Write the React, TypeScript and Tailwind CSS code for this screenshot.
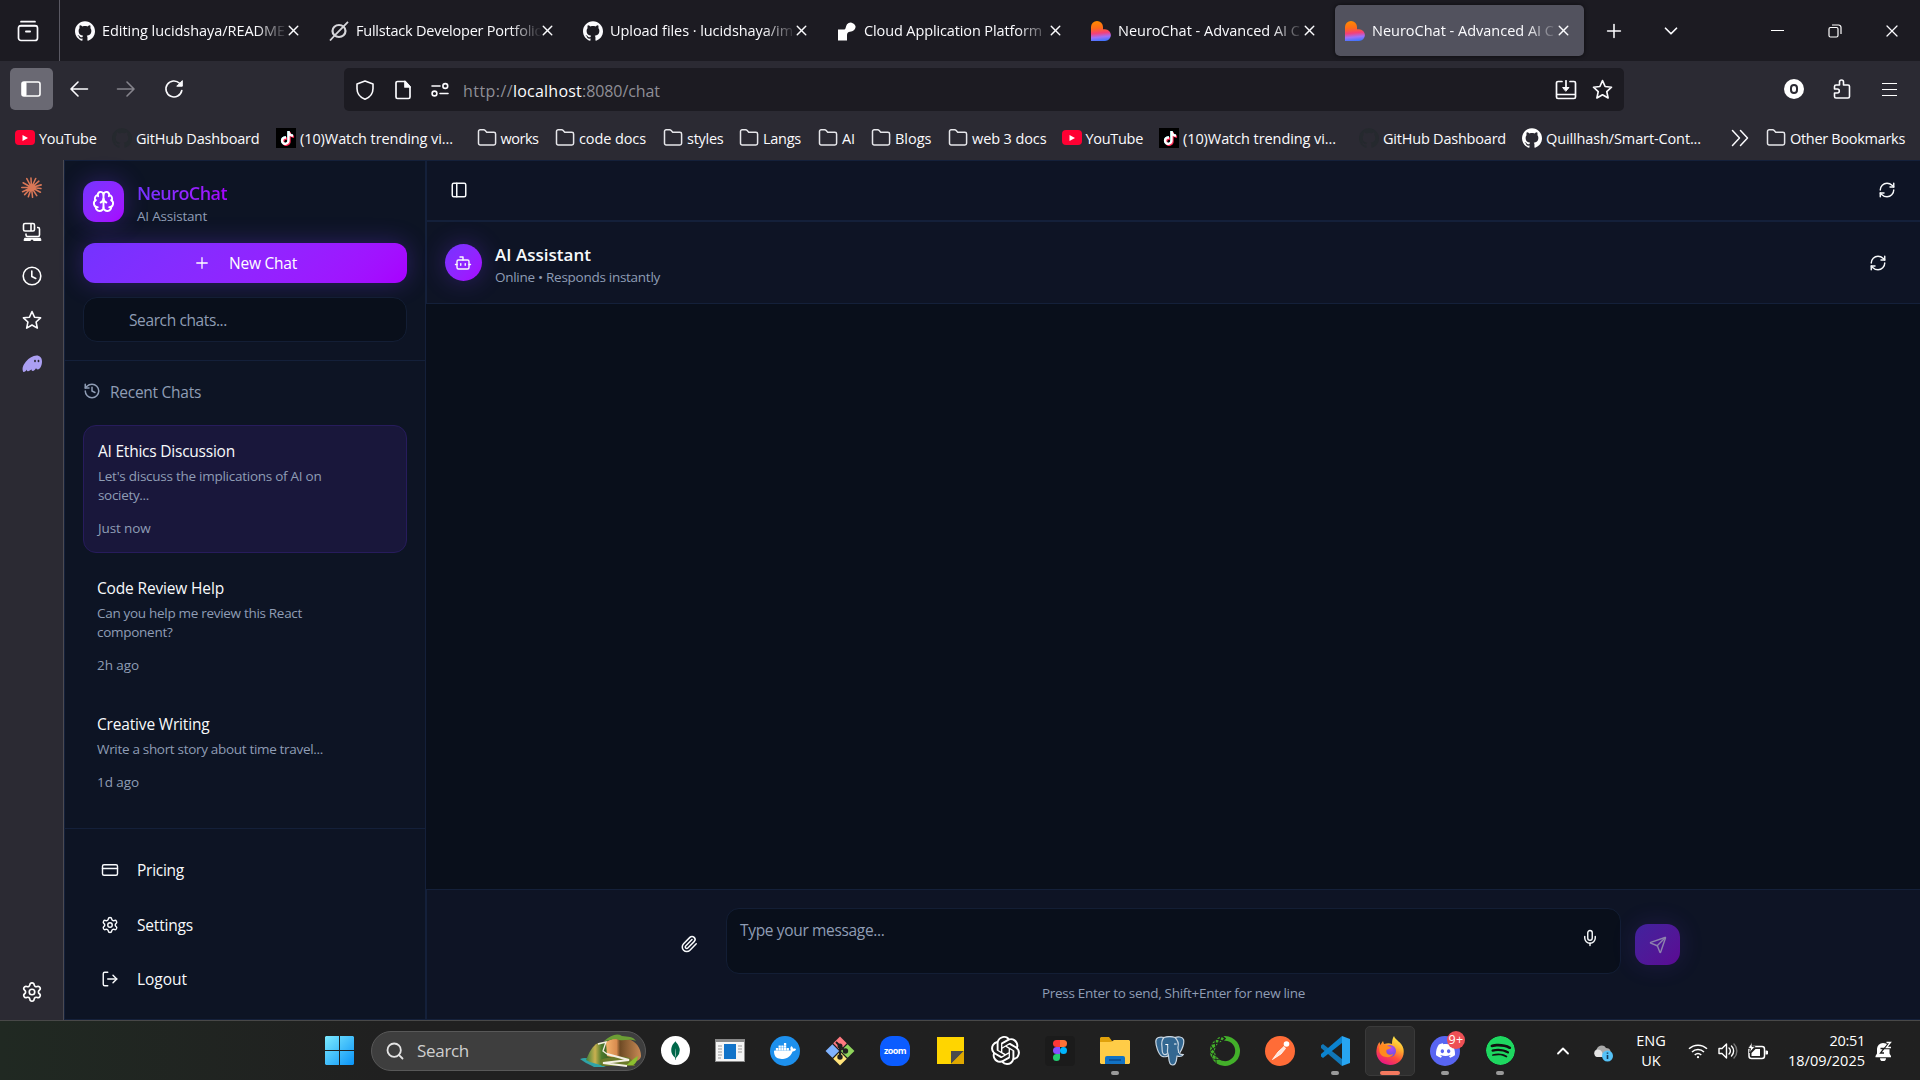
import { useLayoutEffect, useRef, useState } from "react";
import type { ReactNode } from "react";
import {
  Bot,
  Brain,
  ChevronDown,
  ChevronUp,
  CreditCard,
  History,
  LogOut,
  Mic,
  PanelLeft,
  Paperclip,
  Plus,
  RefreshCw,
  Search,
  Send,
  Settings,
  X,
} from "lucide-react";
import {
  SiAnaconda,
  SiDiscord,
  SiDocker,
  SiGithub,
  SiMongodb,
  SiOpenai,
  SiSpotify,
  SiTiktok,
} from "react-icons/si";

/* Single line of text whose tracking is adjusted so that it fills `w` pixels. */
function Fit({ w, children, className = "" }: { w: number; children: string; className?: string }) {
  const ref = useRef<HTMLSpanElement>(null);
  const [spacing, setSpacing] = useState(0);
  useLayoutEffect(() => {
    if (!ref.current) return;
    const natural = ref.current.getBoundingClientRect().width - spacing * children.length;
    setSpacing((w - natural) / children.length);
  }, [w, children]);
  return (
    <span ref={ref} style={{ letterSpacing: spacing }} className={`inline-block whitespace-pre ${className}`}>
      {children}
    </span>
  );
}

/* ---------- Browser chrome ---------- */

function Heart() {
  return (
    <svg viewBox="0 0 20 20" className="size-5">
      <defs>
        <linearGradient id="heart" x1="0.4" y1="0" x2="0.5" y2="1">
          <stop offset="0" stopColor="#ff8a00" />
          <stop offset="0.35" stopColor="#ff6a1a" />
          <stop offset="0.6" stopColor="#f43f7a" />
          <stop offset="0.8" stopColor="#a070f8" />
          <stop offset="1" stopColor="#3f74ff" />
        </linearGradient>
      </defs>
      <path d="M0 6a6 6 0 0 1 12 0v2.200h2a5.900 5.900 0 0 1 0 11.800H0z" fill="url(#heart)" />
    </svg>
  );
}

function SlashedO() {
  return (
    <svg viewBox="0 0 20 20" className="size-5" fill="none" stroke="#d6d6da" strokeWidth="2.200">
      <ellipse cx="10" cy="10" rx="6.500" ry="6" />
      <path d="M1 19.500 7 13 19 .8" strokeWidth="1.800" />
    </svg>
  );
}

function RenderLogo() {
  return (
    <svg viewBox="0 0 20 20" className="size-5" fill="#fff">
      <path d="M1 8.500h6.500C9 8 8.500 5.500 10 3.200A5 5 0 0 1 18.500 5c.5 3.500-2.500 5.500-5.500 5.700-2 .3-3 1.300-3 3.300v5.500H1z" />
    </svg>
  );
}

const tabs: { icon: ReactNode; title: string; w: number }[] = [
  { icon: <SiGithub className="size-5" />, title: "Editing lucidshaya/README", w: 183 },
  { icon: <SlashedO />, title: "Fullstack Developer Portfolio", w: 187 },
  { icon: <SiGithub className="size-5" />, title: "Upload files · lucidshaya/im", w: 183 },
  { icon: <RenderLogo />, title: "Cloud Application Platform", w: 178 },
  { icon: <Heart />, title: "NeuroChat - Advanced AI C", w: 182 },
  { icon: <Heart />, title: "NeuroChat - Advanced AI C", w: 182 },
];

function TabStrip() {
  return (
    <div className="flex h-[61px] items-center bg-[#1c1b22] text-[#fbfbfe]">
      <div className="flex h-full w-[60px] items-center justify-center border-r border-[#5a5963] pr-1">
        <svg viewBox="0 0 22 22" className="size-[22px]" fill="none" stroke="#fbfbfe" strokeWidth="1.700" strokeLinecap="round">
          <path d="M4 1.700h14M2.500 6h17" />
          <rect x="1.500" y="5.500" width="19" height="15" rx="2.500" />
          <path d="M9 11.500h4" strokeWidth="2" />
        </svg>
      </div>
      <div className="ml-[5px] flex gap-[5px]">
        {tabs.map((t, i) => (
          <div
            key={i}
            className={`flex h-[51px] w-[249px] items-center rounded-[5px] pl-2.5 ${
              i === 5 ? "bg-[#52525e] shadow-[0_0_4px_rgba(0,0,0,0.6)]" : ""
            }`}
          >
            {t.icon}
            <div className="ml-[7px] w-[188px] shrink-0 overflow-hidden pt-px text-[14.500px] leading-6 [mask-image:linear-gradient(to_right,black_154px,transparent_186px)]">
              <Fit w={t.w}>{t.title}</Fit>
            </div>
            <X className="-ml-[5px] size-[17px] shrink-0" strokeWidth={2} />
          </div>
        ))}
      </div>
      <Plus className="ml-[19px] size-[22px]" strokeWidth={1.700} />
      <ChevronDown className="ml-[35px] size-[22px]" strokeWidth={1.900} />
      <div className="ml-[89px] h-px w-[13px] bg-white" />
      <svg viewBox="0 0 14 14" className="ml-[44px] size-[14px]" fill="none" stroke="#fff" strokeWidth="1.200">
        <rect x="1" y="3.500" width="9" height="9.500" rx="1.500" />
        <path d="M4 1h6.500A2.500 2.500 0 0 1 13 3.500V10" />
      </svg>
      <X className="ml-10 size-[20px]" strokeWidth={1.500} />
    </div>
  );
}

function NavBar() {
  return (
    <div className="flex h-[54px] items-start bg-[#2b2a33] pt-[7px] text-[#fbfbfe]">
      <div className="flex h-[42px] flex-1 items-center pl-2.5">
        <div className="flex h-[42px] w-[43px] items-center justify-center rounded-[5px] bg-[#6a6973] pr-px">
          <svg viewBox="0 0 20 16" className="h-4 w-5" fill="none" stroke="#fff" strokeWidth="1.600">
            <rect x="1" y="1" width="18" height="14" rx="2" />
            <path d="M1.500 1.500h3.500v13H1.500z" fill="#fff" strokeWidth="1" />
          </svg>
        </div>
        <svg viewBox="0 0 20 20" className="ml-4 size-5" fill="none" stroke="#fbfbfe" strokeWidth="1.600" strokeLinecap="round" strokeLinejoin="round">
          <path d="M18.500 10h-16M9 3l-7 7 7 7" />
        </svg>
        <svg viewBox="0 0 20 20" className="ml-[27px] size-5" fill="none" stroke="#85848c" strokeWidth="1.600" strokeLinecap="round" strokeLinejoin="round">
          <path d="M1.500 10h16M11 3l7 7-7 7" />
        </svg>
        <svg viewBox="0 0 20 20" className="ml-[28px] size-5" fill="none" stroke="#fbfbfe" strokeWidth="1.600" strokeLinecap="round">
          <path d="M17.800 11.500A8 8 0 1 1 15.600 4.300L17 5.700" />
          <path d="M18.300 2v5.200h-5.200z" fill="#fbfbfe" strokeWidth="1" strokeLinejoin="round" />
        </svg>
      </div>
      <div className="flex h-[43px] w-[1280px] items-center rounded-[5px] bg-[#1c1b22]">
        <svg viewBox="0 0 20 20" className="ml-[11px] size-5" fill="none" stroke="#fbfbfe" strokeWidth="1.600" strokeLinejoin="round">
          <path d="M10 1 2 4v4.500C2 13.500 5.500 17.500 10 19.200c4.500-1.700 8-5.700 8-10.700V4z" />
        </svg>
        <svg viewBox="0 0 20 20" className="ml-[18px] size-5" fill="none" stroke="#fbfbfe" strokeWidth="1.700" strokeLinejoin="round">
          <path d="M4.500 1.500H12L17 7v10a1.500 1.500 0 0 1-1.500 1.500h-11A1.500 1.500 0 0 1 3 17V3a1.500 1.500 0 0 1 1.500-1.500z" />
          <path d="M12 1.500V7h5z" fill="#fbfbfe" />
        </svg>
        <svg viewBox="0 0 20 20" className="ml-[17px] size-5" fill="none" stroke="#fbfbfe" strokeWidth="1.600" strokeLinecap="round">
          <path d="M2 6h8M10 13.500h8" />
          <circle cx="15.300" cy="6" r="2.400" />
          <circle cx="4.500" cy="13.500" r="2.400" />
        </svg>
        <div className="ml-[13px] w-[1092px] pt-[3px] text-[16px] leading-6 text-[#8f8e96]">
          <Fit w={50}>http://</Fit>
          <Fit w={69} className="text-[#fbfbfe]">localhost</Fit>
          <Fit w={78}>:8080/chat</Fit>
        </div>
        <svg viewBox="0 0 22 20" className="h-5 w-[22px]" fill="none" stroke="#fbfbfe" strokeWidth="1.700" strokeLinecap="round" strokeLinejoin="round">
          <path d="M7 1.500H3a1.500 1.500 0 0 0-1.500 1.500v14A1.500 1.500 0 0 0 3 18.500h16a1.500 1.500 0 0 0 1.500-1.500V3A1.500 1.500 0 0 0 19 1.500h-4M2 14.500h18M11 .8v8.500" />
          <path d="M8 7.500h6l-3 3.500z" fill="#fbfbfe" strokeWidth="1" />
        </svg>
        <StarOutline className="ml-[15px] size-[21px]" />
      </div>
      <div className="flex h-[42px] w-[296px] items-center">
        <div className="ml-[160px] flex size-5 items-center justify-center rounded-full bg-white">
          <div className="h-[10px] w-2 rounded-full border-2 border-[#2b2a33]" />
        </div>
        <svg viewBox="0 0 20 20" className="ml-[28px] size-5" fill="none" stroke="#fbfbfe" strokeWidth="1.600" strokeLinejoin="round">
          <path d="M2.500 10V7.500A1.500 1.500 0 0 1 4 6h3.500V3a2 2 0 0 1 4 0v3H16a1.500 1.500 0 0 1 1.500 1.500v10A1.500 1.500 0 0 1 16 19H4a1.500 1.500 0 0 1-1.500-1.500V14h2.800a2 2 0 0 0 0-4z" />
        </svg>
        <div className="ml-[30px] flex w-[15px] flex-col gap-[5px]">
          <div className="h-px bg-white" />
          <div className="h-px bg-white" />
          <div className="h-px bg-white" />
        </div>
      </div>
    </div>
  );
}

function StarOutline({ className }: { className: string }) {
  return (
    <svg viewBox="0 0 24 24" className={className} fill="none" stroke="#fbfbfe" strokeWidth="1.900" strokeLinejoin="round">
      <path d="M12 1.800 15 8.600l7.300.8-5.400 5 1.500 7.300L12 18l-6.400 3.700 1.500-7.300-5.400-5L9 8.600z" />
    </svg>
  );
}

function Folder() {
  return (
    <svg viewBox="0 0 20 20" className="size-5" fill="none" stroke="#e6e6ea" strokeWidth="1.500" strokeLinejoin="round">
      <path d="M1.500 3.500A1.700 1.700 0 0 1 3.200 1.800h3.500c.6 0 1.100.3 1.500.7l1.500 1.700h7.200a1.700 1.700 0 0 1 1.700 1.700v9.400a1.700 1.700 0 0 1-1.700 1.700H3.200a1.700 1.700 0 0 1-1.700-1.700z" />
    </svg>
  );
}

function YouTube() {
  return (
    <div className="flex h-[15px] w-5 items-center justify-center rounded-[4px] bg-[#ff0033]">
      <svg viewBox="0 0 6 6" className="size-1.5">
        <path d="M.5 0v6L6 3z" fill="#fff" />
      </svg>
    </div>
  );
}

function TikTok() {
  return (
    <div className="relative flex size-5 items-center justify-center bg-black">
      <SiTiktok className="absolute left-[3.500px] top-[3px] size-3.5 text-[#25f4ee]" />
      <SiTiktok className="absolute left-[4.500px] top-1 size-3.5 text-[#fe2c55]" />
      <SiTiktok className="absolute left-1 top-[3.500px] size-3.5 text-white" />
    </div>
  );
}

type IconKind = "yt" | "ghd" | "gh" | "tt" | "dir";

const bookmarks: { icon: IconKind; label: string; text: number; w: number }[] = [
  { icon: "yt", label: "YouTube", text: 57.5, w: 97 },
  { icon: "ghd", label: "GitHub Dashboard", text: 123.5, w: 164 },
  { icon: "tt", label: "(10)Watch trending vi...", text: 153, w: 200.5 },
  { icon: "dir", label: "works", text: 38, w: 78.5 },
  { icon: "dir", label: "code docs", text: 67, w: 108 },
  { icon: "dir", label: "styles", text: 36.5, w: 76 },
  { icon: "dir", label: "Langs", text: 38, w: 79 },
  { icon: "dir", label: "AI", text: 13, w: 53 },
  { icon: "dir", label: "Blogs", text: 36.5, w: 77 },
  { icon: "dir", label: "web 3 docs", text: 74.5, w: 113.5 },
  { icon: "yt", label: "YouTube", text: 57.5, w: 97.5 },
  { icon: "tt", label: "(10)Watch trending vi...", text: 153, w: 200 },
  { icon: "ghd", label: "GitHub Dashboard", text: 123, w: 163 },
  { icon: "gh", label: "Quillhash/Smart-Cont...", text: 155, w: 209 },
];

function BookmarkIcon({ kind }: { kind: IconKind }) {
  if (kind === "yt") return <YouTube />;
  if (kind === "tt") return <TikTok />;
  if (kind === "dir") return <Folder />;
  return <SiGithub className={`size-5 ${kind === "gh" ? "text-white" : "text-[#25292e]"}`} />;
}

function BookmarksBar() {
  return (
    <div className="flex h-[45px] items-center bg-[#2b2a33] pl-[15px] text-[14.500px] leading-6 text-[#fbfbfe]">
      {bookmarks.map((b, i) => (
        <div key={i} className="flex shrink-0 items-center" style={{ width: b.w }}>
          <div className="mr-1 w-5 shrink-0">
            <BookmarkIcon kind={b.icon} />
          </div>
          <Fit w={b.text} className="mt-[2px]">{b.label}</Fit>
        </div>
      ))}
      <svg viewBox="0 0 18 18" className="size-[18px]" fill="none" stroke="#fbfbfe" strokeWidth="1.500" strokeLinecap="round" strokeLinejoin="round">
        <path d="m1.500 1.500 7 7.500-7 7.500M9.500 1.500l7 7.500-7 7.500" />
      </svg>
      <div className="ml-[17px] mr-1">
        <Folder />
      </div>
      <Fit w={115} className="mt-[2px]">Other Bookmarks</Fit>
    </div>
  );
}

function Rail() {
  return (
    <div className="flex w-16 shrink-0 flex-col items-center border-r border-[#4b4a52] bg-[#2b2a33] pb-[17px] pt-[17px] text-white">
      <svg viewBox="-10 -10 20 20" className="size-[21px]" stroke="#d97757" strokeWidth="1.500" strokeLinecap="round">
        <path d="M0 0-.5-9M0 0 4-8.600M0 0 7-6M0 0 9.200-2.500M0 0 9 1M0 0 8.500 4.500M0 0 5 7.800M0 0 1 9.300M0 0-3 8.800M0 0-6.500 6.800M0 0-8.500 4M0 0-9.300 0M0 0-8-4.500M0 0-4.500-8.500" />
      </svg>
      <svg viewBox="0 0 20 20" className="mt-6 size-5" fill="none" stroke="#fff" strokeWidth="1.600" strokeLinejoin="round">
        <rect x="1.500" y="1.500" width="11" height="7.500" rx="1.500" />
        <path d="M9 1.500V9M4 11.500v1.500A1.500 1.500 0 0 0 5.500 14.500H16a1.500 1.500 0 0 0 1.500-1.500V7A1.500 1.500 0 0 0 16 5.500h-1" />
        <path d="M2.500 18h5.500M12 18h6.500M3 16.700h15" strokeWidth="1.900" strokeLinecap="round" />
      </svg>
      <svg viewBox="0 0 20 20" className="mt-6 size-5" fill="none" stroke="#fff" strokeWidth="1.600" strokeLinecap="round" strokeLinejoin="round">
        <circle cx="10" cy="10" r="8.800" />
        <path d="M9.800 5v5.500l4 2" />
      </svg>
      <StarOutline className="mt-6 size-5" />
      <svg viewBox="0 0 20 18" className="mt-[25px] h-[18px] w-5">
        <path d="M1.300 17C-.5 14 1 10 4 6.500 7 3 11 .5 14.500.5 18 .5 20 3 20 6.500c0 4-2 8-4.200 8-1.300 0-1.500-1-1.700-1.500C13.500 14.500 12 16 10.700 16c-1 0-1.300-1-1.200-1.700C8.300 15.500 6.800 16.500 5.700 16.200c-.8-.2-.9-1-.7-1.600C4 16 2.500 17.300 1.300 17z" fill="#ab9ff2" />
        <ellipse cx="13" cy="6" rx=".9" ry="1.200" fill="#2b2a33" />
        <ellipse cx="16.500" cy="6" rx=".9" ry="1.200" fill="#2b2a33" />
      </svg>
      <Settings className="mt-auto size-[22px]" strokeWidth={1.800} />
    </div>
  );
}

/* ---------- NeuroChat ---------- */

const chats = [
  { title: "AI Ethics Discussion", tw: 137, lines: [{ s: "Let's discuss the implications of AI on", w: 223.5 }, { s: "society...", w: 51 }], time: "Just now", mw: 52.5 },
  { title: "Code Review Help", tw: 127, lines: [{ s: "Can you help me review this React", w: 205 }, { s: "component?", w: 75.5 }], time: "2h ago", mw: 42 },
  { title: "Creative Writing", tw: 112.5, lines: [{ s: "Write a short story about time travel...", w: 226 }], time: "1d ago", mw: 42 },
];

const menu = [
  { icon: <CreditCard className="size-[18px]" strokeWidth={1.900} />, label: "Pricing", w: 47 },
  { icon: <Settings className="size-[18px]" strokeWidth={1.900} />, label: "Settings", w: 56 },
  { icon: <LogOut className="size-[18px]" strokeWidth={1.900} />, label: "Logout", w: 50 },
];

function ChatSidebar() {
  return (
    <div className="flex w-[362px] shrink-0 flex-col border border-[#14203a] bg-[#0d1424]">
      <div className="border-b border-[#14203a] px-[18px] pb-[18px] pt-5">
        <div className="flex h-[41px]">
          <div className="flex size-[41px] items-center justify-center rounded-[13px] bg-linear-135 from-[#7433ff] to-[#a800ff] shadow-[0_0_24px_rgba(124,58,255,0.3)]">
            <Brain className="size-[23px] text-white" strokeWidth={2} />
          </div>
          <div className="ml-[13px] flex flex-col items-start">
            <Fit w={90} className="bg-linear-to-r from-[#7433ff] to-[#a800ff] bg-clip-text text-[18px] font-semibold leading-[25px] text-transparent">
              NeuroChat
            </Fit>
            <Fit w={70} className="text-[13.500px] leading-5 text-[#8f9db5]">AI Assistant</Fit>
          </div>
        </div>
        <div className="mt-[21px] flex h-10 items-center rounded-[12px] bg-linear-135 from-[#7433ff] to-[#a800ff] pl-[110px] text-white shadow-[0_0_24px_rgba(124,58,255,0.3)]">
          <Plus className="size-[18px]" strokeWidth={1.700} />
          <Fit w={68} className="ml-[18px] text-[15.500px] leading-6">New Chat</Fit>
        </div>
        <div className="mt-3.5 flex h-[45px] items-center rounded-[14px] border border-[#131e35] bg-[#090f1b] pl-[45px]">
          <Fit w={98} className="text-[15.500px] leading-6 text-[#8f9db5]">Search chats...</Fit>
        </div>
      </div>

      <div className="flex-1 px-[18px] pt-5 text-[#8f9db5]">
        <div className="flex h-5 items-center">
          <History className="size-[18px]" strokeWidth={2} />
          <Fit w={91} className="ml-[9px] mt-px text-[15.500px] leading-6">Recent Chats</Fit>
        </div>
        <div className="mt-6 flex flex-col gap-[9px]">
          {chats.map((c, i) => (
            <div
              key={c.title}
              className={`flex flex-col items-start rounded-[13px] ${
                i === 0 ? "border border-[#271c5c] bg-[#19173b] px-3.5 pb-[13px] pt-[13px]" : "px-3.5 pb-[13px] pt-3.5"
              }`}
            >
              <Fit w={c.tw} className="text-[15.500px] leading-[25px] text-[#f8fafc]">{c.title}</Fit>
              {c.lines.map((l) => (
                <Fit key={l.s} w={l.w} className="relative top-[3px] text-[13.500px] leading-[19px]">
                  {l.s}
                </Fit>
              ))}
              <Fit w={c.mw} className="mt-[15px] text-[13.500px] leading-[22px]">{c.time}</Fit>
            </div>
          ))}
        </div>
      </div>

      <div className="h-[191px] border-t border-[#14203a] pl-9 pt-3.5 text-[#f8fafc]">
        {menu.map((m) => (
          <div key={m.label} className="flex h-[54.500px] items-center">
            {m.icon}
            <Fit w={m.w} className="ml-[18px] text-[15.500px] leading-6">{m.label}</Fit>
          </div>
        ))}
      </div>
    </div>
  );
}

function ChatMain() {
  return (
    <div className="flex flex-1 flex-col border-y border-[#14203a] bg-[#090f1b] text-[#f8fafc]">
      <div className="flex h-[61px] items-center justify-between border-b-2 border-l border-[#14203a] bg-[#0e1425] pb-px pl-[23px] pr-6">
        <PanelLeft className="size-[18px]" strokeWidth={2} />
        <RefreshCw className="size-[18px]" strokeWidth={1.900} />
      </div>
      <div className="flex h-[82px] items-center border-b border-l border-[#14203a] bg-[#0e1425] pl-[18px] pr-[33px]">
        <div className="flex size-[37px] items-center justify-center rounded-full bg-linear-135 from-[#7433ff] to-[#a800ff] pr-px shadow-[0_0_24px_rgba(124,58,255,0.3)]">
          <Bot className="size-[18px]" strokeWidth={1.900} />
        </div>
        <div className="ml-[13px] flex flex-1 flex-col items-start pt-1">
          <Fit w={96} className="text-[17px] font-semibold leading-[24px]">AI Assistant</Fit>
          <Fit w={165} className="text-[13.500px] leading-[20px] text-[#8f9db5]">Online • Responds instantly</Fit>
        </div>
        <RefreshCw className="size-[18px]" strokeWidth={1.900} />
      </div>
      <div className="flex-1" />
      <div className="h-[130px] border-l border-t border-[#14203a] bg-[#0e1425] pt-[18px]">
        <div className="flex h-[66px] items-start pl-[253px]">
          <Paperclip className="mt-[27px] size-[18px]" strokeWidth={2} />
          <div className="ml-[28px] flex h-[66px] w-[895px] justify-between rounded-[13px] border border-[#131e35] bg-[#090f1b] pl-[13px] pr-[21px]">
            <Fit w={144.500} className="mt-[9px] text-[15.500px] leading-6 text-[#8f9db5]">Type your message...</Fit>
            <Mic className="mt-5 size-[18px]" strokeWidth={1.900} />
          </div>
          <div className="ml-[14px] mt-4 flex h-[41px] w-[45px] items-center justify-center rounded-[13px] bg-linear-135 from-[#41229d] to-[#5b0893] shadow-[0_0_24px_rgba(124,58,255,0.15)]">
            <Send className="size-[18px] text-[#8d82ae]" strokeWidth={1.900} />
          </div>
        </div>
        <div className="mt-1.5 text-center text-[#8f9db5]">
          <Fit w={263} className="text-[13.500px] leading-[20px]">Press Enter to send, Shift+Enter for new line</Fit>
        </div>
      </div>
    </div>
  );
}

/* ---------- Windows taskbar ---------- */

function SearchArt() {
  return (
    <svg viewBox="0 0 62 34" className="h-[34px] w-[62px]">
      <defs>
        <linearGradient id="rock" x1="0" x2="1">
          <stop offset="0" stopColor="#f4b36c" />
          <stop offset="0.3" stopColor="#d98c50" />
          <stop offset="0.4" stopColor="#6e4a24" />
          <stop offset="1" stopColor="#c98a55" />
        </linearGradient>
        <linearGradient id="hill" x1="0" x2="1">
          <stop offset="0" stopColor="#3f8038" />
          <stop offset="0.35" stopColor="#c9b050" />
          <stop offset="0.6" stopColor="#4b7a2c" />
          <stop offset="1" stopColor="#39531f" />
        </linearGradient>
      </defs>
      <path d="M0 25c5-2 9-1 12 2l14 6H14c-3-2-6-3-8-4z" fill="#2fa3a8" />
      <path d="M6 26C9 19 12 12 18 9l10-2 4 18-8 7-14-4z" fill="url(#hill)" />
      <path d="M26 8c6-4 16-6 22-3 8 2 13 9 13 17 0 3-4 6-10 6l-24-6z" fill="url(#rock)" />
      <path d="M24 7C31 1 37-1 42 2c6 1 11 0 14 5-8-3-13 1-20-2-4 0-8 2-12 2z" fill="#6c9e35" />
      <path d="M20 26c10-4 26-5 31-1l4 7H22z" fill="#6b7a2a" />
      <path d="M18 10l8-2-3 9 4 3" fill="none" stroke="#f4efe4" strokeWidth="1.300" />
      <path d="M27 20l22 6-26 3 24 3" fill="none" stroke="#f4efe4" strokeWidth="1.900" />
      <path d="M46 31c4-2 6-6 12-9-1 4-1 7-5 9z" fill="#8cbf2f" />
    </svg>
  );
}

function TaskIcon({ children, dot, active }: { children: ReactNode; dot?: boolean; active?: boolean }) {
  return (
    <div
      className={`relative flex h-[50px] w-[50px] shrink-0 items-center justify-center rounded-[5px] ${
        active ? "border border-[#3a3a3a] bg-[#2e2e2e]" : ""
      }`}
    >
      {children}
      {dot && <div className="absolute bottom-px left-[21px] h-1 w-2 rounded-full bg-[#9a9a9a]" />}
      {active && <div className="absolute bottom-0 left-3.5 h-1 w-5 rounded-full bg-[#f4795f]" />}
    </div>
  );
}

function GitTiles() {
  return (
    <svg viewBox="0 0 30 30" className="size-[30px]">
      <g transform="rotate(45 15 15)">
        <rect x="4.800" y="4.800" width="9.600" height="9.600" fill="#ff7a80" />
        <rect x="15.600" y="4.800" width="9.600" height="9.600" fill="#8fd45c" />
        <rect x="4.800" y="15.600" width="9.600" height="9.600" fill="#80b3ff" />
        <rect x="15.600" y="15.600" width="9.600" height="9.600" fill="#ffe37a" />
      </g>
      <path d="M11 6l4 4v11M15 10l5 5" fill="none" stroke="#202020" strokeWidth="2" />
      <circle cx="15" cy="10" r="2.500" fill="#202020" />
      <circle cx="15" cy="21" r="2.700" fill="#202020" />
      <circle cx="20.500" cy="15" r="2.700" fill="#202020" />
    </svg>
  );
}

function PostgresElephant() {
  return (
    <svg viewBox="0 0 30 30" className="size-[30px]" fill="#336791" stroke="#c9d6e2" strokeWidth="1.200" strokeLinejoin="round" strokeLinecap="round">
      <path d="M20 1.500c3-1.200 7.500-.8 8.500 2 1 3.500-1.500 9.500-3.500 13-1 1.500-.5 2 3.500 2-1.500 2-4.500 2.200-6.500 1.500-.5 2.500 0 9-4.500 9-4 0-3.500-6-4-9.500-1.500 1.500-5 1.500-6.500.8C3 18 .8 9 .8 5.500.8 1.500 5 .3 9 1.500c3.500-1.200 7.500-1.200 11 0z" />
      <path d="M9 1.500C6.500 4 6.500 8 7 11c.3 2.500-.3 4.500 1 6.500.8 1.300 2.500 1.700 4 .3M20 1.500c3 3 4 6 3 9.500-.5 2 1 3.500.5 5.500M13.500 19.500c-.3-2-1.500-3-1-5.500.3-2 .5-3.500 0-5" fill="none" />
      <path d="M10.800 8.500h2M19.500 8h1.500" fill="none" stroke="#fff" />
    </svg>
  );
}

function Firefox() {
  return (
    <svg viewBox="0 0 28 30" className="h-[30px] w-7">
      <defs>
        <linearGradient id="fx" x1="0.8" y1="0" x2="0.3" y2="1">
          <stop offset="0" stopColor="#fff44f" />
          <stop offset="0.35" stopColor="#ffb02e" />
          <stop offset="0.65" stopColor="#ff4f3a" />
          <stop offset="1" stopColor="#e6128a" />
        </linearGradient>
        <radialGradient id="globe" cx="0.6" cy="0.3" r="0.8">
          <stop offset="0" stopColor="#b04cf5" />
          <stop offset="1" stopColor="#5b4fd8" />
        </radialGradient>
      </defs>
      <path d="M18 0c1 4 8 6 9.500 13C29 22 23 29 14 29S-.5 22 .5 14C1 10 2 8 3.500 6l.8 3L7 5l1 3c3-1 6-1 8 0 0-3 .5-6 2-8z" fill="url(#fx)" />
      <circle cx="14" cy="15" r="6" fill="url(#globe)" />
      <path d="M3 11c3-3 6-3 8.500-1l4 1c-1 2-4 2-5 3-1 4 3 6 7 4-3 5-12 4-14-2z" fill="#ff8a1e" />
    </svg>
  );
}

function Taskbar() {
  return (
    <div className="flex h-[60px] items-center border-t border-[#484848] bg-linear-to-r from-[#202922] via-[#202020] via-20% to-[#202020] pl-[325px] text-white">
      <svg viewBox="0 0 29 29" className="size-[29px]">
        <defs>
          <linearGradient id="win" x1="0" y1="0" x2="1" y2="1">
            <stop offset="0" stopColor="#7ceaff" />
            <stop offset="1" stopColor="#0a93f7" />
          </linearGradient>
        </defs>
        <path d="M1 0h13v14H0V1zM15 0h13l1 1v13H15zM0 15h14v14H1l-1-1zM15 15h14v13l-1 1H15z" fill="url(#win)" />
      </svg>
      <div className="ml-[17px] flex h-10 w-[275px] items-center rounded-full border border-[#585858] bg-[#3e3e3e] pl-[13px]">
        <Search className="size-5 text-[#e4e4e4]" strokeWidth={2.200} />
        <Fit w={52} className="ml-3 text-[17px] leading-6 text-[#cfcfcf]">Search</Fit>
        <div className="ml-auto mr-[3px]">
          <SearchArt />
        </div>
      </div>
      <div className="ml-1 flex gap-[5px]">
        <TaskIcon>
          <div className="flex size-[29px] items-center justify-center rounded-full bg-white">
            <SiMongodb className="size-[19px] text-[#00684a]" />
          </div>
        </TaskIcon>
        <TaskIcon>
          <div className="flex h-[23px] w-[30px] items-center justify-between border border-t-[3px] border-[#8a8a8a] bg-[#f5f5f5] px-0.5">
            <svg viewBox="0 0 4 14" className="h-3.5 w-1"><path d="M0 1h4M0 4h4M0 7h4M0 10h4M0 13h3" stroke="#999" /></svg>
            <div className="h-[15px] w-3 bg-[#1173c9]" />
            <svg viewBox="0 0 4 14" className="h-3.5 w-1"><path d="M0 1h4M0 4h4M0 7h4" stroke="#999" /></svg>
          </div>
        </TaskIcon>
        <TaskIcon>
          <div className="flex size-[30px] items-center justify-center rounded-full bg-[#1d90ed]">
            <SiDocker className="size-[22px]" />
          </div>
        </TaskIcon>
        <TaskIcon><GitTiles /></TaskIcon>
        <TaskIcon>
          <div className="flex size-[30px] items-center justify-center rounded-[12px] bg-[#0b5cff]">
            <Fit w={22} className="text-[9px] font-bold leading-3">zoom</Fit>
          </div>
        </TaskIcon>
        <TaskIcon>
          <svg viewBox="0 0 27 27" className="size-[27px]">
            <path d="M0 0h27v27H0z" fill="#ffd500" />
            <path d="M14 27V14h13z" fill="#494a4c" />
            <path d="M14 27 27 14v13z" fill="#e0a800" />
          </svg>
        </TaskIcon>
        <TaskIcon><SiOpenai className="size-[29px]" /></TaskIcon>
        <TaskIcon>
          <div className="flex size-[30px] items-center justify-center rounded-[4px] bg-[#1b1b1b]">
            <svg viewBox="0 0 14 21" className="h-[21px] w-3.5">
              <path d="M3.500 0H7v7H3.500a3.500 3.500 0 0 1 0-7z" fill="#ff3737" />
              <path d="M7 0h3.500a3.500 3.500 0 0 1 0 7H7z" fill="#ff7237" />
              <path d="M3.500 7H7v7H3.500a3.500 3.500 0 0 1 0-7z" fill="#874fff" />
              <circle cx="10.500" cy="10.500" r="3.500" fill="#00b6ff" />
              <path d="M3.500 14H7v3.500A3.500 3.500 0 1 1 3.500 14z" fill="#24cb71" />
            </svg>
          </div>
        </TaskIcon>
        <TaskIcon dot>
          <svg viewBox="0 0 30 27" className="h-[27px] w-[30px]">
            <path d="M1 0h8l3 4v6H0V1z" fill="#e0a10b" />
            <path d="M0 5h11l3-2h15l1 1v22l-1 1H1l-1-1z" fill="#ffcc47" />
            <path d="M5 27v-6a2 2 0 0 1 2-2h16a2 2 0 0 1 2 2v6z" fill="#1272c4" />
            <path d="M9 23h12" stroke="#0a4a8c" strokeWidth="1.500" />
          </svg>
        </TaskIcon>
        <TaskIcon><PostgresElephant /></TaskIcon>
        <TaskIcon><SiAnaconda className="size-[30px] text-[#43b02a]" /></TaskIcon>
        <TaskIcon>
          <svg viewBox="0 0 30 30" className="size-[30px]">
            <circle cx="15" cy="15" r="15" fill="#ff6c37" />
            <circle cx="21.500" cy="8" r="2.800" fill="#fff" />
            <path d="M19 10.500 13 16l-5.500 7.500L16 18l4.500-5.500z" fill="#ffe3d8" stroke="#fff" strokeWidth=".8" />
          </svg>
        </TaskIcon>
        <TaskIcon dot>
          <svg viewBox="0 0 30 30" className="size-[30px]">
            <path d="M1 9.500 3 8l19 15v7L1 12z" fill="#1177b8" />
            <path d="M1 20.500 3 22 22 7V0L1 18z" fill="#0b83cf" />
            <path d="M22 0l8 3v24l-8 3z" fill="#27a5f2" />
          </svg>
        </TaskIcon>
        <TaskIcon active><Firefox /></TaskIcon>
        <TaskIcon dot>
          <div className="flex size-[30px] items-center justify-center rounded-full bg-[#5865f2]">
            <SiDiscord className="size-[19px]" />
          </div>
          <div className="absolute right-[5px] top-[5px] flex size-[18px] items-center justify-center rounded-full bg-[#ee4f55]">
            <Fit w={15} className="text-[12.500px] leading-4">9+</Fit>
          </div>
        </TaskIcon>
        <TaskIcon dot>
          <SiSpotify className="size-[29px] rounded-full bg-[#111] text-[#1ed760]" />
        </TaskIcon>
      </div>
      <ChevronUp className="ml-[28px] size-[20px]" strokeWidth={2.200} />
      <svg viewBox="0 0 20 18" className="ml-5 mt-1 h-[18px] w-5">
        <path d="M4 13a4 4 0 0 1-.5-7.500C5 1 11 0 13 4c4 0 5 3 4.500 5L9 13z" fill="#a9a9a9" />
        <path d="M4 13A4 4 0 0 1 4 5.500C8 5 10 8 10 13z" fill="#e4e4e4" />
        <circle cx="14.500" cy="12" r="5.500" fill="#55c2f7" />
        <path d="M14.500 11v4M14.500 8.500v1.300" stroke="#103a5c" strokeWidth="1.600" />
      </svg>
      <div className="ml-[23px] flex w-[30px] flex-col items-center text-[14.500px] leading-5">
        <Fit w={29.5}>ENG</Fit>
        <Fit w={19.5}>UK</Fit>
      </div>
      <svg viewBox="0 0 20 16" className="ml-[22px] h-4 w-5" fill="none" stroke="#fff" strokeWidth="1.500">
        <path d="M1 5.800a13 13 0 0 1 18 0M4 9a8.700 8.700 0 0 1 12 0M6.700 12a5 5 0 0 1 6.600 0" />
        <circle cx="10" cy="14.200" r="1.100" fill="#fff" stroke="none" />
      </svg>
      <svg viewBox="0 0 20 18" className="ml-[10px] h-[18px] w-5" fill="none" stroke="#fff" strokeWidth="1.400" strokeLinejoin="round" strokeLinecap="round">
        <path d="M1 6.500h3L8.500 2v14L4 11.500H1zM11 6a4 4 0 0 1 0 6M13.500 4a7 7 0 0 1 0 10" />
        <path d="M16 2a10 10 0 0 1 0 14" stroke="#777" />
      </svg>
      <svg viewBox="0 0 21 18" className="ml-[9px] h-[18px] w-[21px]">
        <rect x="2" y="4.500" width="15.500" height="12" rx="2.500" fill="none" stroke="#fff" strokeWidth="1.500" />
        <path d="M18.500 8.500h1a1.200 1.200 0 0 1 0 4h-1z" fill="#fff" />
        <path d="M8.500 7h4.500v7H4.500V11z" fill="#fff" />
        <path d="M5 0 1 6.500h2.500L2.500 11 8 4.500H5z" fill="#fff" stroke="#202020" strokeWidth=".8" />
      </svg>
      <div className="ml-[19px] flex w-[78px] flex-col items-end text-[14.500px] leading-5">
        <Fit w={35.5}>20:51</Fit>
        <Fit w={77}>18/09/2025</Fit>
      </div>
      <svg viewBox="0 0 18 20" className="ml-2.5 h-5 w-[18px]">
        <path d="M8 2a6 6 0 0 0-6 6v4.500L.5 15v1.200H16V15l-1.500-2.500V5L11 2.500z" fill="#fff" />
        <path d="M5 17.300h6a3 3 0 0 1-6 0z" fill="#fff" />
        <path d="M5.500 7.500H9l-3.500 4.500H9" fill="none" stroke="#202020" strokeWidth="1.300" />
        <path d="M11.500 1.500h4l-4 5h4.500" fill="none" stroke="#202020" strokeWidth="3.400" />
        <path d="M11.500 1.500h4l-4 5h4.500" fill="none" stroke="#fff" strokeWidth="1.300" />
      </svg>
    </div>
  );
}

export default function App() {
  return (
    <div className="flex h-[1080px] w-[1920px] flex-col overflow-hidden bg-[#2b2a33] font-['Open_Sans','Noto_Sans',sans-serif]">
      <TabStrip />
      <NavBar />
      <BookmarksBar />
      <div className="flex min-h-0 flex-1">
        <Rail />
        <ChatSidebar />
        <ChatMain />
      </div>
      <Taskbar />
    </div>
  );
}
